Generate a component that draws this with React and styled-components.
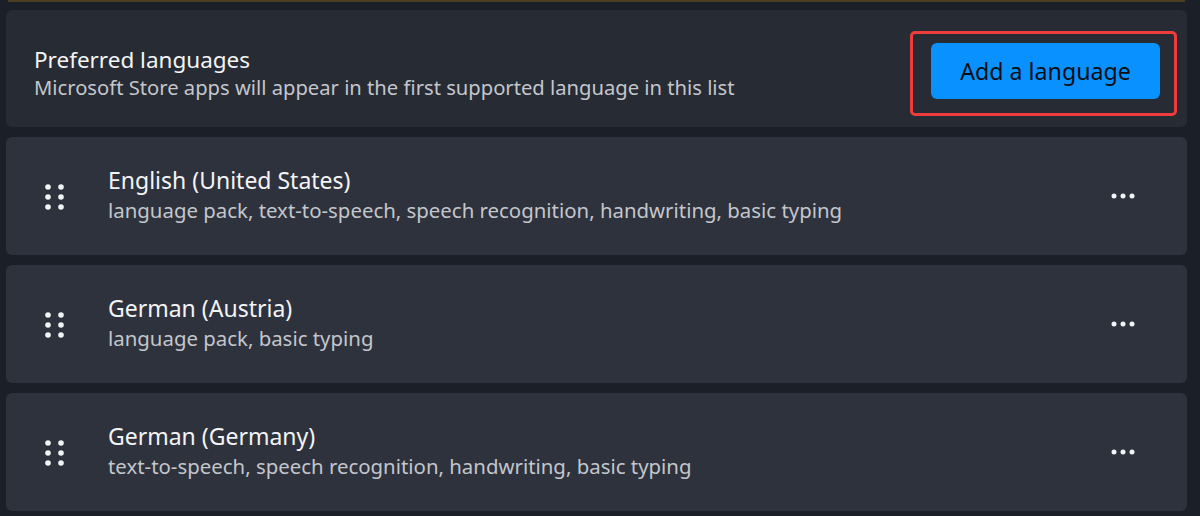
import React from "react";
import styled, { createGlobalStyle } from "styled-components";

const GlobalStyle = createGlobalStyle`
  html, body {
    margin: 0;
    padding: 0;
    background: #1b1f27;
    font-family: "Noto Sans", "Open Sans", sans-serif;
  }
`;

const languages = [
  {
    name: "English (United States)",
    features:
      "language pack, text-to-speech, speech recognition, handwriting, basic typing",
  },
  { name: "German (Austria)", features: "language pack, basic typing" },
  {
    name: "German (Germany)",
    features: "text-to-speech, speech recognition, handwriting, basic typing",
  },
];

const DragIcon = () => (
  <svg width="20" height="30" viewBox="0 0 20 30">
    {[0, 1, 2].map((r) =>
      [0, 1].map((c) => (
        <circle key={`${r}-${c}`} cx={3 + c * 13} cy={4 + r * 10} r="2.8" fill="#f2f3f5" />
      ))
    )}
  </svg>
);

const MoreIcon = () => (
  <svg width="24" height="6" viewBox="0 0 24 6">
    {[0, 1, 2].map((i) => (
      <circle key={i} cx={3 + i * 9} cy="3" r="2.5" fill="#f2f3f5" />
    ))}
  </svg>
);

const App = () => {
  return (
    <>
      <GlobalStyle />
      <Page>
        <TopEdge />
        <HeaderCard>
          <HeaderText>
            <Title>Preferred languages</Title>
            <Subtitle>
              Microsoft Store apps will appear in the first supported language
              in this list
            </Subtitle>
          </HeaderText>
          <Highlight>
            <AddButton>Add a language</AddButton>
          </Highlight>
        </HeaderCard>
        {languages.map((lang) => (
          <LanguageRow key={lang.name}>
            <Handle>
              <DragIcon />
            </Handle>
            <RowText>
              <RowTitle>{lang.name}</RowTitle>
              <RowSubtitle>{lang.features}</RowSubtitle>
            </RowText>
            <MoreButton>
              <MoreIcon />
            </MoreButton>
          </LanguageRow>
        ))}
      </Page>
    </>
  );
};

const Page = styled.main`
  width: 1200px;
  height: 516px;
  overflow: hidden;
  display: flex;
  flex-direction: column;
  gap: 10px;
  padding: 0 13px 0 6px;
  box-sizing: border-box;
  background: #1b1f27;
`;

const TopEdge = styled.div`
  height: 2px;
  margin: 0 2px -2px 2px;
  background: #4a3d20;
  flex-shrink: 0;
`;

const HeaderCard = styled.section`
  height: 117px;
  flex-shrink: 0;
  background: #272b34;
  border-radius: 6px;
  display: flex;
  align-items: center;
  justify-content: space-between;
  padding: 0 10px 0 28px;
  box-sizing: border-box;
`;

const HeaderText = styled.div`
  display: flex;
  flex-direction: column;
  margin-top: 8px;
`;

const Title = styled.h2`
  margin: 0;
  font-size: 22.5px;
  line-height: 29px;
  font-weight: 400;
  color: #f3f4f6;
`;

const Subtitle = styled.p`
  margin: 0;
  font-size: 20.2px;
  line-height: 27px;
  color: #c3c6cc;
`;

const Highlight = styled.div`
  border: 3px solid #ee3b3b;
  border-radius: 5px;
  padding: 9px 14px 14px 18px;
  margin-top: 9px;
`;

const AddButton = styled.button`
  width: 229px;
  height: 56px;
  border: none;
  border-radius: 6px;
  background: #0991ff;
  color: #0b0d12;
  font-family: inherit;
  font-size: 23.2px;
  cursor: pointer;
`;

const LanguageRow = styled.article`
  height: 118px;
  flex-shrink: 0;
  background: #2e323c;
  border-radius: 6px;
  display: flex;
  align-items: center;
  padding: 0 52px 0 39px;
  box-sizing: border-box;
`;

const Handle = styled.div`
  width: 20px;
  display: flex;
  margin-top: 4px;
`;

const RowText = styled.div`
  flex: 1;
  margin-left: 43px;
  display: flex;
  flex-direction: column;
  margin-top: -2px;
`;

const RowTitle = styled.h3`
  margin: 0;
  font-size: 23px;
  line-height: 29px;
  font-weight: 400;
  color: #f3f4f6;
`;

const RowSubtitle = styled.p`
  margin: 0;
  font-size: 20.4px;
  line-height: 30px;
  color: #c3c6cc;
`;

const MoreButton = styled.button`
  background: none;
  border: none;
  padding: 0;
  display: flex;
  cursor: pointer;
`;

export default App;
